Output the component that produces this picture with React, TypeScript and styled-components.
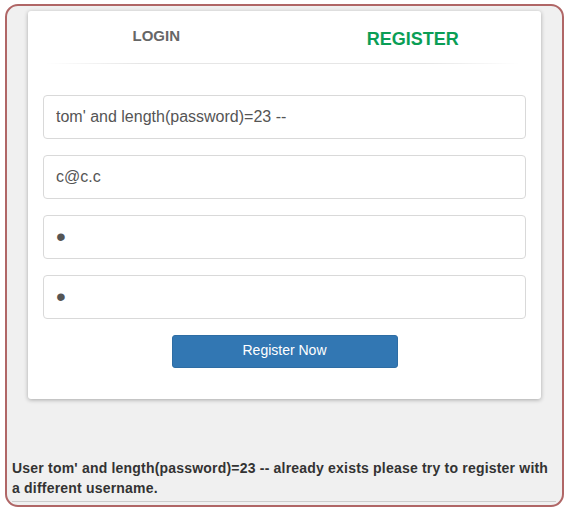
import React from "react";
import styled, { createGlobalStyle } from "styled-components";

const Global = createGlobalStyle`
  html, body { margin: 0; padding: 0; background: #ffffff; }
  body { font-family: "Liberation Sans", Arial, sans-serif; }
  * { box-sizing: border-box; }
`;

const Page = styled.div`
  padding: 4px 0 0 5px;
`;

const Frame = styled.div`
  width: 559px;
  height: 503px;
  border: 2px solid #b06666;
  border-radius: 13px;
  background: #f0f0f0;
  padding: 5px 4px 0 4px;
  display: flex;
  flex-direction: column;
`;

const Card = styled.div`
  margin: 0 0 0 17px;
  width: 513px;
  height: 388px;
  background: #ffffff;
  border-radius: 3px;
  box-shadow: 0 1px 4px rgba(0, 0, 0, 0.3);
  padding: 0 15px;
  display: flex;
  flex-direction: column;
`;

const Tabs = styled.div`
  display: grid;
  grid-template-columns: 1fr 1fr;
  margin: 0 -15px;
  height: 52px;
  align-items: center;
`;

const Tab = styled.div<{ $active?: boolean }>`
  text-align: center;
  font-weight: bold;
  font-size: ${(p) => (p.$active ? "18px" : "15px")};
  color: ${(p) => (p.$active ? "#0a9e55" : "#666666")};
  padding: ${(p) => (p.$active ? "4px 0 0" : "0 0 4px")};
`;

const Divider = styled.div`
  height: 1px;
  margin: 0 6px 0 2px;
  background: linear-gradient(to right, rgba(230,230,230,0), #e6e6e6 20%, #e6e6e6 80%, rgba(230,230,230,0));
`;

const Form = styled.div`
  display: flex;
  flex-direction: column;
  gap: 16px;
  margin-top: 31px;
`;

const Field = styled.input<{ $secret?: boolean }>`
  display: block;
  width: 100%;
  height: 44px;
  border: 1px solid #d9d9d9;
  border-radius: 4px;
  padding: 0 12px;
  font-family: "Liberation Sans", Arial, sans-serif;
  font-size: ${(p) => (p.$secret ? "28px" : "16px")};
  color: #555555;
  background: #ffffff;
  outline: none;
`;

const Button = styled.button`
  align-self: center;
  width: 226px;
  height: 33px;
  padding: 0 0 3px;
  background: #3277b3;
  color: #ffffff;
  border: 1px solid #2e6da4;
  border-radius: 3px;
  font-family: "Liberation Sans", Arial, sans-serif;
  font-size: 14px;
`;

const Message = styled.div`
  margin-top: 59px;
  padding: 0 4px 0 1px;
  font-size: 14px;
  line-height: 20px;
  font-weight: bold;
  letter-spacing: 0.2px;
  color: #333333;
`;

const Rule = styled.div`
  height: 1px;
  background: #cccccc;
  margin: 3px 2px 0 1px;
`;

export default function App() {
  return (
    <>
      <Global />
      <Page>
        <Frame>
          <Card>
            <Tabs>
              <Tab>LOGIN</Tab>
              <Tab $active>REGISTER</Tab>
            </Tabs>
            <Divider />
            <Form>
              <Field readOnly defaultValue="tom' and length(password)=23 --" />
              <Field readOnly defaultValue="c@c.c" />
              <Field readOnly $secret type="password" defaultValue="a" />
              <Field readOnly $secret type="password" defaultValue="a" />
              <Button>Register Now</Button>
            </Form>
          </Card>
          <Message>
            User tom' and length(password)=23 -- already exists please try to register with a different username.
          </Message>
          <Rule />
        </Frame>
      </Page>
    </>
  );
}
